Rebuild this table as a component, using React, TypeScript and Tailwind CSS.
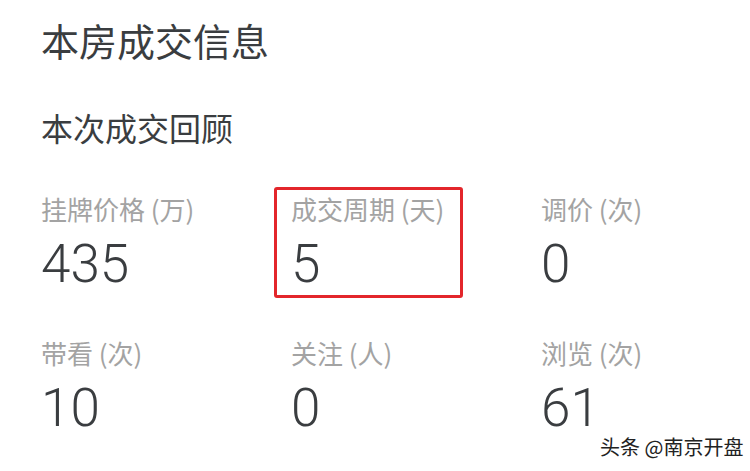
import React from "react";

type Item = { label: string; value: string; hl?: boolean };

const items: Item[] = [
  { label: "挂牌价格 (万)", value: "435" },
  { label: "成交周期 (天)", value: "5", hl: true },
  { label: "调价 (次)", value: "0" },
  { label: "带看 (次)", value: "10" },
  { label: "关注 (人)", value: "0" },
  { label: "浏览 (次)", value: "61" },
];

function Cell({ item }: { item: Item }) {
  return (
    <div className="relative flex flex-col">
      <div className="font-['Noto_Sans_CJK_SC',sans-serif] text-[26px] leading-[26px] text-[#a3a3a3] whitespace-nowrap">
        {item.label}
      </div>
      <div className="mt-[16px] font-['Roboto',sans-serif] text-[53px] leading-[53px] font-light text-[#3a3d40]">
        {item.value}
      </div>
      {item.hl && (
        <div className="absolute left-[-17px] top-[-9px] w-[189px] h-[111px] border-[3px] border-[#e3262b] rounded-[3px]" />
      )}
    </div>
  );
}

export default function App() {
  return (
    <div className="relative w-[750px] h-[471px] bg-white overflow-hidden pl-[41px] font-['Noto_Sans_CJK_SC',sans-serif]">
      <div className="pt-[21px] text-[38px] leading-[38px] font-normal text-[#3a3d40]">
        本房成交信息
      </div>
      <div className="mt-[52px] text-[32px] leading-[32px] font-normal text-[#3a3d40]">
        本次成交回顾
      </div>
      <div className="mt-[53px] grid grid-cols-[250px_250px_250px] gap-y-[49px]">
        {items.map((it, i) => (
          <Cell key={i} item={it} />
        ))}
      </div>
      <div className="absolute left-[600px] top-[436px] text-[20px] leading-[22px] text-[#222] whitespace-nowrap">
        头条 @南京开盘
      </div>
    </div>
  );
}
